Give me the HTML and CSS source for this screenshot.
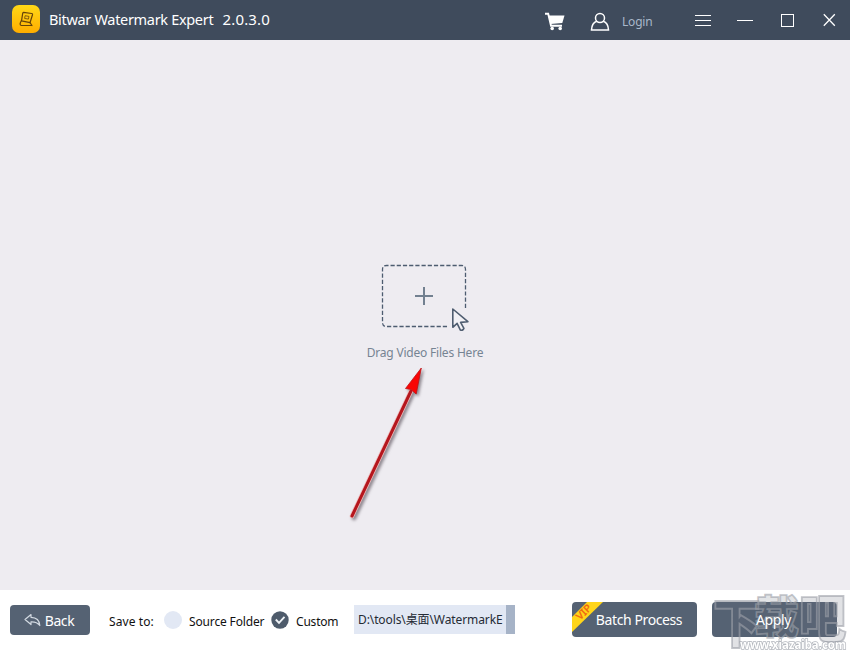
FILE: index.html
```html
<!DOCTYPE html>
<html lang="en">
<head>
<meta charset="utf-8">
<title>Bitwar Watermark Expert</title>
<link rel="stylesheet" href="styles.css">
</head>
<body>
<div class="window">
  <header class="titlebar">
    <svg class="logo" width="28" height="28" viewBox="0 0 28 28">
      <defs><linearGradient id="gold" x1="0" y1="0" x2="0" y2="1"><stop offset="0" stop-color="#ffd817"/><stop offset="1" stop-color="#ffad00"/></linearGradient></defs>
      <rect width="28" height="28" rx="7" fill="url(#gold)"/>
      <g fill="none" stroke="#65430a" stroke-width="1.2" stroke-linejoin="round" stroke-linecap="round">
        <path d="M11.500 7.300l8.200 1.200q1 .2.8 1.200l-2.500 8-8.500-1.800 1.200-7.600q.1-1 .8-1z"/>
        <path d="M9.300 15.700q-2.300 4.300-.1 4.800h10.800M18 17.700l2 2.800"/>
        <path d="M13.500 10.800l3.500.600-.6 2.700-3.400-.600z" stroke-width=".8"/>
      </g>
    </svg>
    <h1 class="title"><span class="name">Bitwar Watermark Expert</span><span class="version">2.0.3.0</span></h1>
    <svg class="cart" width="22" height="20" viewBox="0 0 22 20" fill="#fff">
      <path d="M0 1.800h3.200L6 13.700h11" fill="none" stroke="#fff" stroke-width="1.900"/>
      <path d="M3.500 3.500H19.500L17.300 11 5.500 12z"/>
      <circle cx="7.200" cy="16.500" r="1.800"/><circle cx="15.200" cy="16.500" r="1.800"/>
    </svg>
    <svg class="user" width="20" height="20" viewBox="0 0 20 20" fill="none" stroke="#fff" stroke-width="1.500">
      <circle cx="10" cy="6" r="4.500"/><path d="M6.800 9.300C3.500 10.500 1.700 13 1.500 17.900h17C18.300 13 16.500 10.500 13.200 9.300"/>
    </svg>
    <span class="login">Login</span>
    <svg class="controls" width="142" height="16" viewBox="0 0 142 16" fill="none" stroke="#fff" stroke-width="1">
      <path d="M0 3.500h16M0 8.500h16M0 13.500h16M42 8.500h16" />
      <rect x="86.500" y="2.500" width="12" height="12"/>
      <path d="M128.800 2.300l11 11.400M139.800 2.300l-11 11.400" stroke-width="1.300"/>
    </svg>
  </header>

  <main class="stage">
    <div class="drop">
      <svg class="drop-art" width="90" height="70" viewBox="0 0 90 70" fill="none">
        <path d="M86.500 47V8.500q0-4-4-4h-75q-4 0-4 4v53q0 4 4 4h61" stroke="#4d5c70" stroke-width="1.300" stroke-dasharray="4.200 2"/>
        <path d="M36 35h18M45 26v18" stroke="#728090" stroke-width="2"/>
        <path d="M73.800 48v18.300l4.300-3.900 3.300 6.700q2.400.9 3.500-1.700l-3.300-6 7.300-.7z" stroke="#4f5d70" stroke-width="1.600" fill="#f2f1f5" stroke-linejoin="round"/>
      </svg>
      <p class="hint">Drag Video Files Here</p>
    </div>
    <svg class="arrow" width="100" height="165" viewBox="0 0 100 165">
      <g class="arrow-shape">
        <path d="M12 156L71 31" stroke="#efb8b8" stroke-width="4.500" stroke-linecap="round"/>
        <path d="M12 156L71 31" stroke="#b5161d" stroke-width="3" stroke-linecap="round"/>
        <path d="M81.300 8L65.500 28.500l5.500 1 5.200 4.500z" fill="#f90505" stroke="#bd1116" stroke-width=".8"/>
      </g>
    </svg>
  </main>

  <footer class="bar">
    <button class="btn back">
      <svg width="17" height="14" viewBox="0 0 17 14" fill="none" stroke="#d3dae2" stroke-width="1.200" stroke-linejoin="round"><path d="M7 1.500L1 6.500l6 5V8.800c4-.2 6.500.7 8.800 3.700C15.500 7.500 12.500 4.500 7 4.300z"/></svg>
      <span>Back</span>
    </button>
    <span class="label save">Save to:</span>
    <i class="radio"></i>
    <span class="label source">Source Folder</span>
    <svg class="check" width="18" height="18" viewBox="0 0 18 18"><circle cx="9" cy="9" r="8.700" fill="#4e5b6b"/><path d="M4.800 8.500l3.200 3.400 5.500-6" fill="none" stroke="#eef2f6" stroke-width="1.900"/></svg>
    <span class="label custom">Custom</span>
    <div class="path"><span>D:\tools\桌面\WatermarkE</span></div>
    <button class="btn batch">
      <svg class="vip" width="34" height="31" viewBox="0 0 34 31"><path d="M15 0h16L0 30V15z" fill="#ffd51a"/><text class="vip-text" transform="translate(8 18.500) rotate(-44)" textLength="17" lengthAdjust="spacingAndGlyphs">VIP</text></svg>
      <span>Batch Process</span>
    </button>
    <button class="btn apply"><span>Apply</span></button>
    <svg class="mark" width="137" height="60" viewBox="0 0 137 60">
      <g class="mark-name">
        <text transform="translate(0 53) scale(1.060 1.180)">下</text>
        <text transform="translate(41 44) scale(1 1)">载</text>
        <text transform="translate(86 48) scale(1.050 1.150)">吧</text>
      </g>
      <text class="mark-url" x="27" y="58.500" textLength="106" lengthAdjust="spacingAndGlyphs">www.xiazaiba.com</text>
    </svg>
  </footer>
</div>
</body>
</html>
```
FILE: styles.css
```css
* { box-sizing: border-box; }
body { margin: 0; font-family: "Noto Sans", "Noto Sans CJK SC", sans-serif; }
h1, p { margin: 0; font-weight: 400; }
svg { display: block; flex: none; }
span, h1, p { white-space: nowrap; }
.window { width: 850px; height: 650px; display: flex; flex-direction: column; overflow: hidden; background: #eeecf1; }
.titlebar { height: 40px; flex: none; display: flex; align-items: center; padding-left: 12px; background: #3f4b5c; color: #fff; }
.logo { margin-top: -2px; }
.title { display: flex; justify-content: space-between; width: 221px; margin: -2px 274px 0 9px; font-size: 15px; line-height: 20px; }
.name { font-size: 14.5px; letter-spacing: -.32px; }
.version { letter-spacing: .15px; }
.cart { margin-left: 1px; margin-top: 3px; }
.user { margin: 4px 0 0 23px; }
.login { width: 30px; margin: 3px 43px 0 12px; font-size: 12px; letter-spacing: -.2px; color: #a9b8ca; }
.stage { height: 550px; flex: none; display: flex; justify-content: center; position: relative; }
.drop { display: flex; flex-direction: column; align-items: center; padding-top: 221px; }
.drop-art { margin-right: 2px; }
.hint { margin-top: 13px; font-size: 12px; line-height: 18px; letter-spacing: -.2px; color: #768493; }
.arrow { position: absolute; left: 340px; top: 320px; }
.arrow-shape { filter: drop-shadow(2px 2px 1.5px rgba(60, 50, 60, .55)); }
.bar { height: 60px; flex: none; display: flex; align-items: center; padding-left: 10px; background: #fff; position: relative; }
.btn { display: flex; align-items: center; justify-content: center; border: 0; padding: 0; border-radius: 4px; background: #556273; color: #fff; font: 14px "Noto Sans", sans-serif; letter-spacing: -.4px; }
.back { width: 80px; height: 30px; gap: 4px; padding-right: 2px; }
.label { margin-top: 2px; font-size: 12px; color: #111; }
.save { width: 46px; margin-left: 19px; letter-spacing: .1px; }
.radio { width: 18px; height: 18px; margin: -1px 0 0 9px; border-radius: 50%; background: #e2e8f4; }
.source { width: 76px; margin-left: 7px; letter-spacing: -.15px; }
.check { margin: -1px 0 0 6px; }
.custom { width: 42px; margin-left: 7px; letter-spacing: -.2px; }
.path { width: 161px; height: 29px; margin: -1px 0 0 16px; padding-left: 4px; border-right: 9px solid #a6b3c7; background: #e2e8f4; font-size: 12px; line-height: 29px; letter-spacing: -.1px; color: #252b34; }
.batch { width: 125px; height: 35px; margin: -1px 0 0 57px; position: relative; padding-left: 9px; overflow: hidden; }
.vip { position: absolute; left: 0; top: 0; }
.vip-text { font: 10px "Noto Sans", sans-serif; letter-spacing: 0; fill: #f05f12; stroke: #f05f12; stroke-width: .3px; }
.apply { width: 125px; height: 35px; margin: -1px 0 0 15px; padding-right: 2px; }
.apply span { position: relative; z-index: 2; }
.mark { position: absolute; left: 713px; top: 0; z-index: 1; pointer-events: none; }
.mark-name { font: 900 45px "Noto Sans CJK SC", sans-serif; fill: rgba(105, 112, 124, .2); stroke: rgba(158, 162, 170, .62); stroke-width: 1.7px; }
.mark-url { font: bold 12px "Noto Sans", sans-serif; fill: #fff; stroke: #9a9fa8; stroke-width: 1.6px; paint-order: stroke; opacity: .75; }
```
